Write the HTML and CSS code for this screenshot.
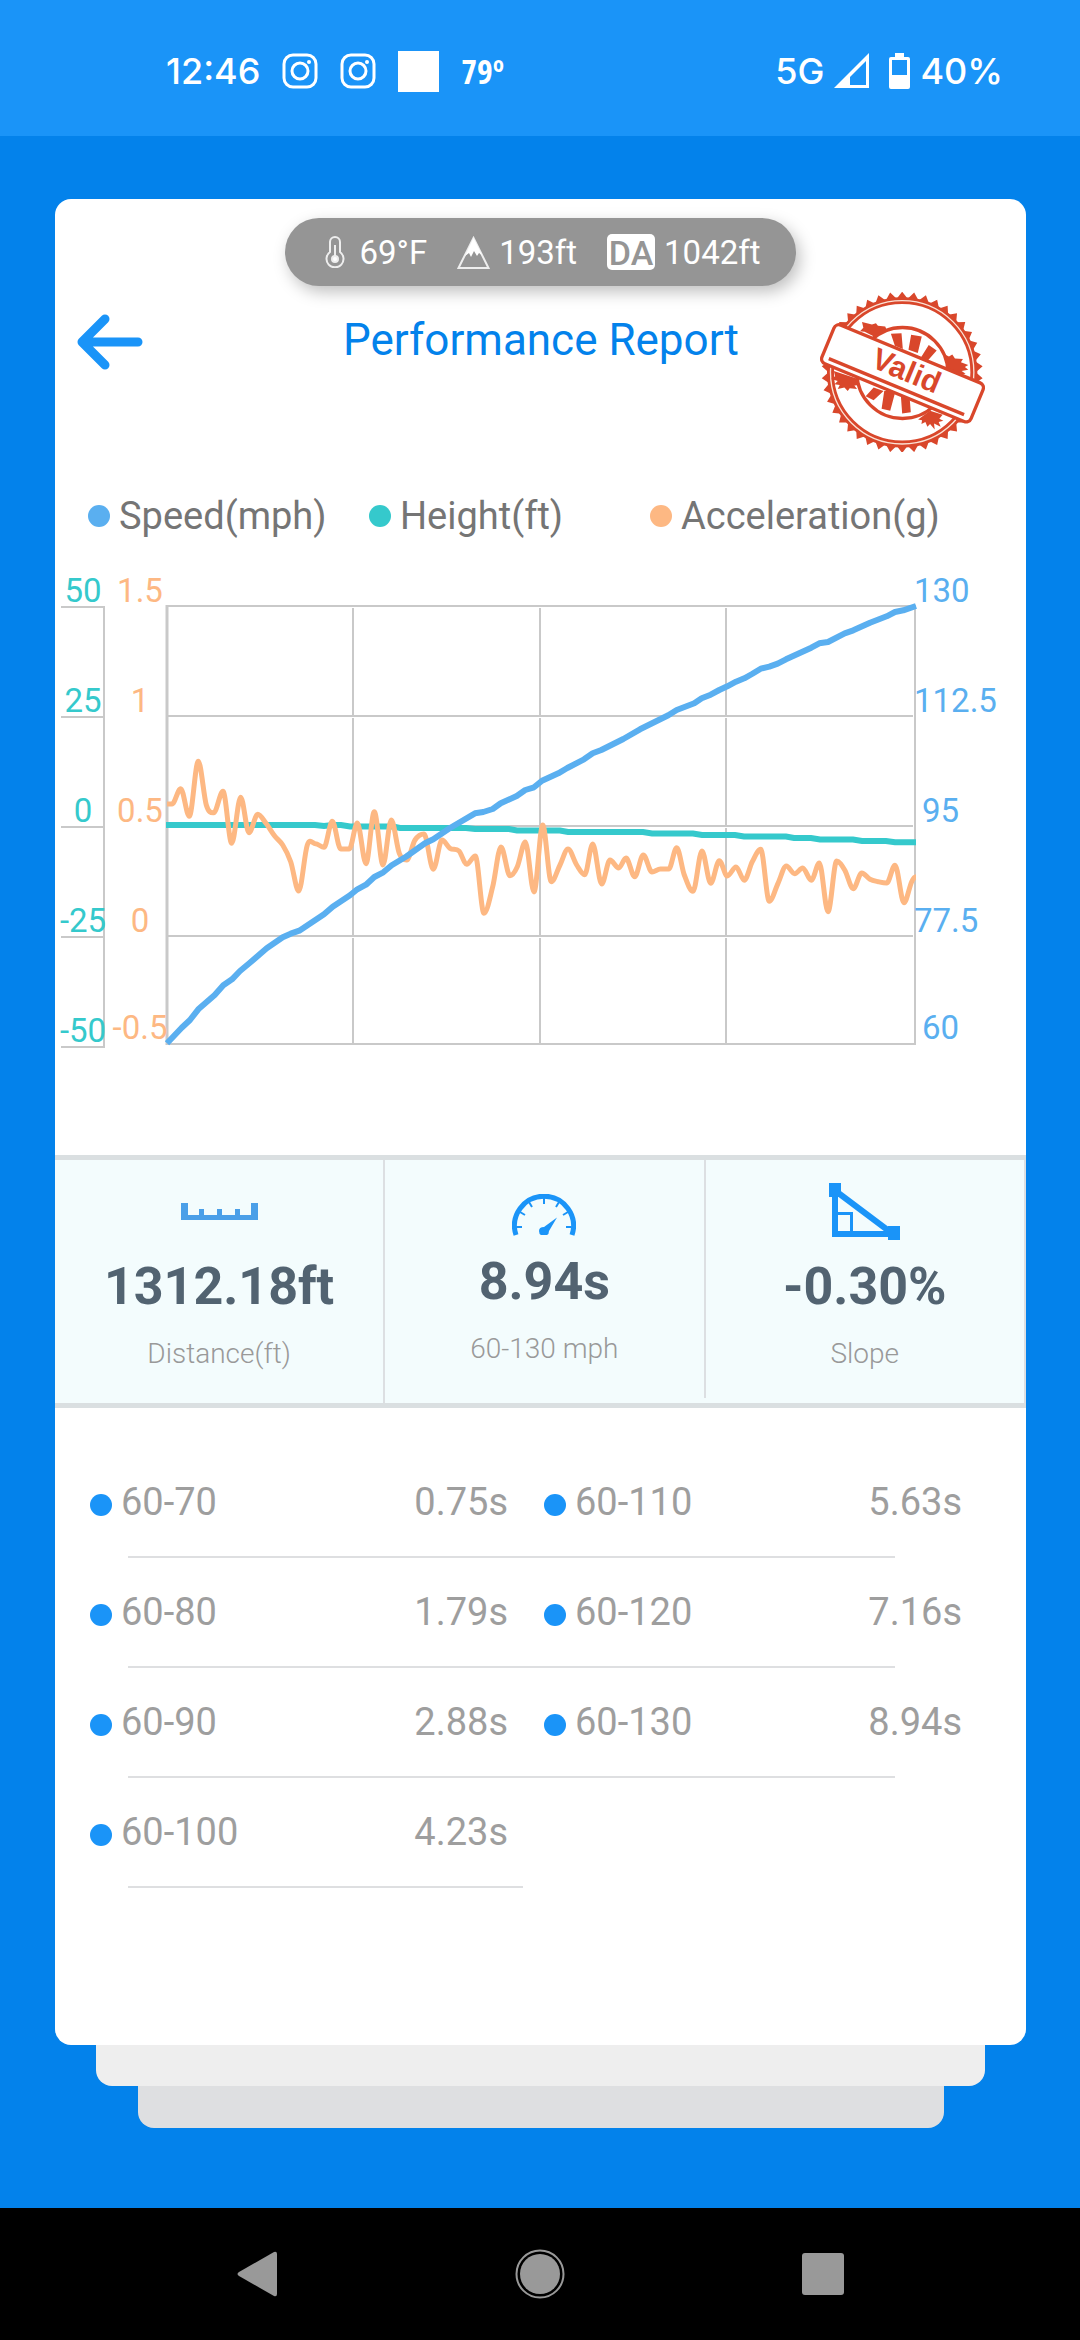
FILE: index.html
```html
<!DOCTYPE html>
<html lang="en">
<head>
    <meta charset="UTF-8">
    <meta name="viewport" content="width=device-width, initial-scale=1.0">
    <title>Performance Report</title>
    <link rel="stylesheet" href="styles.css">
</head>
<body>
    <div class="status-bar">
        <div class="status-left">
            <span>12:46</span>
            <svg class="app-icon" viewBox="0 0 36 36" fill="none" stroke="#fff" stroke-width="3">
                <rect x="2" y="2" width="32" height="32" rx="9"/>
                <circle cx="18" cy="18" r="8"/>
                <circle cx="27" cy="9" r="2" fill="#fff" stroke="none"/>
            </svg>
            <svg class="app-icon" viewBox="0 0 36 36" fill="none" stroke="#fff" stroke-width="3">
                <rect x="2" y="2" width="32" height="32" rx="9"/>
                <circle cx="18" cy="18" r="8"/>
                <circle cx="27" cy="9" r="2" fill="#fff" stroke="none"/>
            </svg>
            <span class="blank-icon"></span>
            <span class="temp">79º</span>
        </div>
        <div class="status-right">
            <span>5G</span>
            <svg width="35" height="36" viewBox="0 0 35 36" fill="#fff">
                <path fill-rule="evenodd" d="M35 0V35H0ZM32 8L16 24V32H32Z"/>
            </svg>
            <svg class="battery" width="21" height="36" viewBox="0 0 21 36" fill="#fff">
                <path fill-rule="evenodd" d="M6 0h9v4h4q2 0 2 2v28q0 2-2 2H2q-2 0-2-2V6q0-2 2-2h4zM3 7v15h15V7z"/>
            </svg>
            <span>40%</span>
        </div>
    </div>

    <main class="page">
        <div class="card">
            <div class="weather">
                <span class="weather-item">
                    <svg width="30" height="32" viewBox="0 0 30 32" fill="none" stroke="#eee" stroke-width="2">
                        <path d="M10 6a5 5 0 0 1 10 0v10a8.500 8.500 0 1 1-10 0z"/>
                        <path d="M15 9v13"/>
                        <circle cx="15" cy="23" r="3" fill="#fff"/>
                    </svg>
                    69°F
                </span>
                <span class="weather-item">
                    <svg width="33" height="33" viewBox="0 0 33 33" fill="none" stroke="#eee" stroke-width="2">
                        <path d="M16.500 2L31.500 32H1.500z"/>
                        <path d="M16.500 2L25 19l-3-2-2 3-3-5-3 6-2-4-4 3z" fill="#fff" stroke="none"/>
                    </svg>
                    193ft
                </span>
                <span class="weather-item">
                    <span class="da">DA</span>
                    1042ft
                </span>
            </div>

            <header class="header">
                <button class="back" aria-label="Back">
                    <svg width="66" height="56" viewBox="0 0 66 56" fill="none" stroke="#1a94f8" stroke-width="9" stroke-linecap="round" stroke-linejoin="round">
                        <path d="M28 5L5 28l23 23M6 28h55"/>
                    </svg>
                </button>
                <h1>Performance Report</h1>
                <svg class="stamp" viewBox="180 64 494 482" fill="none" stroke="#d9472b">
                    <polygon id="stampTeeth" fill="#d9472b" stroke="none"/>
                    <circle cx="426" cy="306" r="216" fill="#fff" stroke-width="21"/>
                    <circle cx="426" cy="306" r="216" stroke="#fbe3d6" stroke-width="4"/>
                    <g fill="#d9472b" stroke="none">
                        <path d="M305 154l30 8 12-4 6 8 22 2 6 14 14 6-30 22-52-26-14-2 10-10z"/>
                        <path d="M545 248l22 10 10-6 8 12 24 2-6 10 22 8-10 6 10 8-20 4 12 8-40 6-40-16z"/>
                        <path d="M220 302l80 26-8 10 10 6-20 2 8 10-22-2-6 8-10-10-20 4 6-12-16-2 10-10-20-6 12-8z"/>
                        <path d="M474 448l36-26 38 12-10 12 12 6-14 4 6 14-20-10 2 18-14-16-8 8-6-14-12 6 2-12z"/>
                    </g>
                    <circle cx="427" cy="308" r="137" fill="#fff" stroke-width="10"/>
                    <g fill="#d9472b" stroke="none">
                        <path d="M392 190l32-2 4 48-24-10zM453 193l32 5-12 50-28-10zM506 224l24 16-28 32-20-10z"/>
                        <path d="M340 352l30 10-30 28-24-12zM372 362h34l-16 60-26-6zM422 376h26l4 50-26 4z"/>
                    </g>
                    <g transform="translate(427 309) rotate(22.500)">
                        <rect x="-243" y="-63" width="486" height="126" rx="16" fill="#fff" stroke-width="10"/>
                        <path d="M-222 44H219" stroke-width="10"/>
                        <text class="stamp-text" x="8" y="19">Valid</text>
                    </g>
                </svg>
            </header>

            <ul class="legend">
                <li><span class="dot speed"></span>Speed(mph)</li>
                <li><span class="dot height"></span>Height(ft)</li>
                <li><span class="dot accel"></span>Acceleration(g)</li>
            </ul>

            <svg class="chart" viewBox="0 0 971 500">
                <!-- height axis -->
                <path class="grid" d="M6 47H50M6 157H50M6 267H50M6 377H50M6 487H50M49 46V488"/>
                <!-- plot grid -->
                <path class="grid" d="M112 46H861M112 156H858M112 266H858M112 376H858M112 484H861M860 46V485"/>
                <path class="grid columns" d="M298 48V484M485 48V484M671 48V484"/>
                <path class="grid base" d="M112 45V485"/>

                <path id="heightLine" class="line-height"/>
                <path id="accelLine" class="line-accel"/>
                <path id="speedLine" class="line-speed"/>

                <g class="label-height">
                    <text x="28" y="42">50</text>
                    <text x="28" y="152">25</text>
                    <text x="28" y="262">0</text>
                    <text x="28" y="372">-25</text>
                    <text x="28" y="482">-50</text>
                </g>
                <g class="label-accel">
                    <text x="85" y="42">1.5</text>
                    <text x="85" y="152">1</text>
                    <text x="85" y="262">0.5</text>
                    <text x="85" y="372">0</text>
                    <text x="85" y="479">-0.5</text>
                </g>
                <g class="label-speed">
                    <text x="859" y="42">130</text>
                    <text x="859" y="152">112.5</text>
                    <text x="867" y="262">95</text>
                    <text x="859" y="372">77.5</text>
                    <text x="867" y="479">60</text>
                </g>
            </svg>

            <section class="stats">
                <div class="stat">
                    <div class="stat-icon">
                        <svg width="77" height="17" viewBox="0 0 77 17" fill="#4a9fe8">
                            <path d="M0 0h7v12h11V6h5v6h13V6h5v6h13V6h5v6h11V0h7v17H0z"/>
                        </svg>
                    </div>
                    <div class="stat-value">1312.18ft</div>
                    <div class="stat-label">Distance(ft)</div>
                </div>
                <div class="stat time">
                    <div class="stat-icon">
                        <svg width="64" height="44" viewBox="0 0 64 44" fill="none" stroke="#1a94f8">
                            <path stroke-width="5" d="M4 41A29.500 29.500 0 1 1 60 41"/>
                            <path stroke-width="2" d="M5 33h5M8 18l5 3M17 8l3 5M32 4v6M47 8l-3 5M56 18l-5 3M59 33h-5"/>
                            <path fill="#1a94f8" stroke="none" d="M45 23.500L37 37q0 3-2 4h-6q-2-1-2-4 0-4 5-4z"/>
                        </svg>
                    </div>
                    <div class="stat-value">8.94s</div>
                    <div class="stat-label">60-130 mph</div>
                </div>
                <div class="stat">
                    <div class="stat-icon">
                        <svg width="71" height="57" viewBox="0 0 71 57" fill="none" stroke="#1a94f8">
                            <path stroke-width="6" d="M6 6V51H64L8 9"/>
                            <path stroke-width="3" d="M6 30.500H22.500V50"/>
                            <path fill="#1a94f8" stroke="none" d="M0 0h12v14H0zM59 43h12v14H59z"/>
                        </svg>
                    </div>
                    <div class="stat-value">-0.30%</div>
                    <div class="stat-label">Slope</div>
                </div>
            </section>

            <table class="splits">
                <tbody>
                    <tr>
                        <th><span class="dot"></span>60-70</th><td>0.75s</td>
                        <th><span class="dot"></span>60-110</th><td>5.63s</td>
                    </tr>
                    <tr>
                        <th><span class="dot"></span>60-80</th><td>1.79s</td>
                        <th><span class="dot"></span>60-120</th><td>7.16s</td>
                    </tr>
                    <tr>
                        <th><span class="dot"></span>60-90</th><td>2.88s</td>
                        <th><span class="dot"></span>60-130</th><td>8.94s</td>
                    </tr>
                    <tr class="half">
                        <th><span class="dot"></span>60-100</th><td>4.23s</td>
                    </tr>
                </tbody>
            </table>
        </div>
        <div class="sheet sheet-1"></div>
        <div class="sheet sheet-2"></div>
    </main>

    <nav class="nav-bar">
        <button aria-label="Back">
            <svg width="50" height="50" viewBox="0 0 50 50" fill="#999">
                <path d="M7 23L42 3q3-1 3 2v40q0 3-3 2L7 27q-3-2 0-4z"/>
            </svg>
        </button>
        <button aria-label="Home">
            <svg width="50" height="50" viewBox="0 0 50 50" fill="#999">
                <circle cx="25" cy="25" r="20"/>
                <circle cx="25" cy="25" r="23.500" fill="none" stroke="#999" stroke-width="2"/>
            </svg>
        </button>
        <button aria-label="Recent apps">
            <svg width="50" height="50" viewBox="0 0 50 50" fill="#999">
                <rect x="4" y="4" width="42" height="42" rx="3"/>
            </svg>
        </button>
    </nav>

    <script src="chart.js"></script>
</body>
</html>
```

FILE: styles.css
```css
* {
    box-sizing: border-box;
}
body {
    margin: 0;
    min-height: 100vh;
    display: flex;
    flex-direction: column;
    background: #0382eb;
    font-family: Roboto, sans-serif;
}
button {
    background: none;
    border: none;
    padding: 0;
    cursor: pointer;
}
svg {
    display: block;
}

/* status bar */
.status-bar {
    height: 136px;
    padding: 6px 77px 0 166px;
    display: flex;
    justify-content: space-between;
    align-items: center;
    background: #1a94f8;
    color: white;
    font-family: Inter, sans-serif;
    font-size: 36px;
    font-weight: 500;
}
.status-left {
    display: flex;
    align-items: center;
    gap: 22px;
}
.status-right {
    display: flex;
    align-items: center;
    gap: 10px;
}
.app-icon {
    width: 36px;
    height: 36px;
}
.blank-icon {
    width: 41px;
    height: 41px;
    background: white;
}
.temp {
    font-family: "Liberation Sans Narrow", "Open Sans Condensed", Roboto, sans-serif;
    font-size: 34px;
    font-weight: 700;
}
.battery {
    margin-left: 10px;
}

/* card */
.page {
    flex: 1;
    padding: 63px 54px 80px 55px;
}
.card {
    padding: 19px 0 157px;
    background: white;
    border-radius: 16px;
}
.sheet {
    border-radius: 0 0 16px 16px;
}
.sheet-1 {
    height: 41px;
    margin: 0 41px;
    background: #eee;
}
.sheet-2 {
    height: 42px;
    margin: 0 82px 0 83px;
    background: #dedfe1;
}
.weather {
    width: fit-content;
    height: 68px;
    margin: 0 auto;
    padding: 0 35px;
    display: flex;
    align-items: center;
    gap: 30px;
    background: #959595;
    border-radius: 34px;
    box-shadow: 4px 6px 16px rgba(0, 0, 0, 0.25);
    color: white;
    font-size: 33px;
}
.weather-item {
    display: flex;
    align-items: center;
    gap: 9px;
}
.da {
    width: 48px;
    height: 36px;
    background: white;
    border-radius: 5px;
    color: #959595;
    font-size: 34px;
    font-weight: 500;
    line-height: 38px;
    text-align: center;
}
.header {
    display: grid;
    grid-template-columns: 1fr auto 1fr;
    align-items: start;
    padding: 6px 41px 0 22px;
}
.back {
    justify-self: start;
    margin-top: 22px;
}
h1 {
    margin: 22px 0 0 20px;
    color: #0382eb;
    font-size: 44px;
    font-weight: 400;
    line-height: 52px;
}
.stamp {
    justify-self: end;
    width: 165px;
    height: 160px;
}
.stamp-text {
    fill: #d9472b;
    stroke: none;
    font-family: "Liberation Sans", sans-serif;
    font-size: 92px;
    font-weight: 700;
    text-anchor: middle;
}

/* chart */
.dot {
    flex: none;
    width: 22px;
    height: 22px;
    border-radius: 50%;
    background: #1a94f8;
}
.legend {
    list-style: none;
    margin: 42px 0 22px;
    padding: 0 95px 0 33px;
    display: grid;
    grid-template-columns: repeat(3, minmax(0, 1fr));
    color: #757575;
    font-size: 38px;
    line-height: 44px;
}
.legend li {
    display: flex;
    align-items: center;
    gap: 9px;
    white-space: nowrap;
}
.speed {
    background: #5aaff0;
}
.height {
    background: #35c9cc;
}
.accel {
    background: #fdb883;
}
.chart {
    width: 100%;
    margin-bottom: 95px;
    fill: none;
    font-size: 33px;
}
.grid {
    stroke: #c9c9c9;
    stroke-width: 2;
}
.columns {
    stroke-dasharray: 107 3;
}
.base {
    stroke-width: 3;
}
.line-height {
    stroke: #35c9cc;
    stroke-width: 6;
}
.line-accel {
    stroke: #fdb883;
    stroke-width: 5;
}
.line-speed {
    stroke: #5aaff0;
    stroke-width: 6;
    stroke-linejoin: round;
}
.label-height {
    fill: #35c9cc;
    text-anchor: middle;
}
.label-accel {
    fill: #fdb883;
    text-anchor: middle;
}
.label-speed {
    fill: #5aaff0;
}

/* stats */
.stats {
    display: grid;
    grid-template-columns: 34% 33% 33%;
    background: #f3fcfd;
    border-top: 5px solid #dadfe1;
    border-bottom: 5px solid #dadfe1;
}
.stat {
    padding: 19px 0 32px;
    border-right: 2px solid #dcdfe2;
    text-align: center;
}
.stat-icon {
    height: 64px;
    display: flex;
    align-items: center;
    justify-content: center;
}
.stat-value {
    margin: 13px 0 19px;
    color: #526371;
    font-size: 52px;
    font-weight: 700;
    line-height: 62px;
}
.stat-label {
    color: #999;
    font-size: 28px;
    font-weight: 300;
    line-height: 34px;
}
.time {
    margin-bottom: 5px;
}
.time .stat-icon {
    height: 59px;
    align-items: flex-end;
}

/* split times */
.splits {
    display: block;
    margin: 40px 28px 0 35px;
    color: #9e9e9e;
    font-size: 38px;
    line-height: 108px;
}
.splits tbody {
    display: block;
}
.splits tr {
    display: grid;
    grid-template-columns: repeat(4, 1fr);
}
.splits tr::after {
    content: "";
    grid-column: 1 / -1;
    height: 2px;
    margin: 0 103px 0 38px;
    background: #dedfe1;
}
.splits .half::after {
    grid-column: 1 / 3;
    margin-right: 21px;
}
.splits th {
    display: flex;
    align-items: center;
    gap: 9px;
    padding: 0;
    font-weight: 400;
}
.splits td {
    padding: 0 36px 0 0;
    text-align: right;
}
.splits .dot {
    margin-top: 6px;
}

/* navigation bar */
.nav-bar {
    height: 132px;
    padding: 0 116px;
    display: grid;
    grid-template-columns: repeat(3, 1fr);
    place-items: center;
    background: black;
}
```

FILE: chart.js
```js
const speed = [
    [112, 483.3], [126.7, 467.7], [135, 460], [143.3, 449.3], [159.7, 435], [168.3, 425.3], [177, 419.3],
    [185, 411], [194.3, 403.3], [211.7, 388.3], [227.7, 377.3], [235.7, 373.7], [244.3, 370.7], [269, 354.3],
    [277.7, 346.7], [295, 335.3], [302.3, 329.3], [311, 324.7], [319.3, 317], [328.3, 312.3], [336.7, 305.3],
    [351.7, 296.3], [370, 283.3], [378.3, 279.3], [395, 268], [420, 253.3], [428.3, 252], [437.7, 249],
    [445.7, 243.3], [461.7, 236], [470.3, 230], [479, 227.3], [487, 220.7], [503.3, 213.3], [512.3, 208],
    [529, 199.3], [537.7, 193.3], [546.3, 190], [568.3, 179], [585, 169.3], [613.3, 155.3], [621.7, 150],
    [639.3, 143.3], [646.7, 138.3], [655.7, 134.7], [664.3, 130], [672.3, 126.3], [681, 121.7], [689.3, 118.3],
    [697, 114], [705.7, 108.7], [714.3, 106.7], [722.7, 103.7], [731, 99.3], [756.3, 87.7], [764.3, 83.3],
    [773, 82], [789.7, 73.3], [798.3, 70.3], [815, 62.7], [831.7, 56.3], [840, 52], [848.3, 50.3], [861, 46]
];

const height = [
    [111, 265], [260, 265], [269, 266], [278, 265], [286, 265], [295, 266.5], [338, 266.5], [345, 268],
    [411, 268], [420, 269], [454, 269], [462, 270.5], [505, 270.5], [513, 272], [588, 272], [597, 273.5],
    [638, 273.5], [647, 275], [680, 275], [689, 276.5], [731, 276.5], [739, 278], [756, 278], [765, 279.5],
    [798, 279.5], [807, 281], [831, 281], [840, 282.3], [861, 282.3]
];

const accel = [
    [112, 244], [117, 244], [125.7, 228.7], [134.3, 256.3], [143.3, 201.3], [151.3, 245], [158.7, 252.7],
    [168, 231.3], [176.7, 283.3], [185.7, 237.3], [194, 272.7], [202.7, 254.3], [211, 263.3], [219.7, 276],
    [227.7, 285], [235.7, 301.7], [243.7, 331], [252.3, 285], [260.3, 283.7], [269, 287.3], [277.3, 261.3],
    [285.7, 289], [294.3, 289], [302.3, 263], [311, 303.7], [319.3, 251.7], [328, 305], [336.3, 260],
    [344.3, 293.3], [351.7, 300], [360, 280], [369, 274], [378.3, 309.3], [387, 280], [395, 288.3],
    [404, 291], [411.7, 304.3], [420.3, 296], [429, 353.3], [437.7, 326.7], [446, 287], [455, 315.7],
    [462.3, 306.7], [470.3, 282], [479, 332], [487.7, 265], [496.3, 321.7], [505, 305], [513, 289],
    [521.7, 305], [529.7, 314.7], [537.7, 284], [546.7, 324], [555, 300], [563.7, 308], [571, 298],
    [579.7, 316.7], [588.3, 295], [597, 312], [605.3, 309], [613.7, 309], [621.7, 287.7], [629.3, 315],
    [638, 331.3], [647, 291], [655.7, 323.3], [664.3, 300.7], [672.3, 316], [681, 307], [689.3, 320.3],
    [697.3, 301.7], [705.7, 289.3], [714.3, 341.3], [723, 323.3], [731.3, 306], [739.7, 313.7], [747.7, 308],
    [756.3, 320.3], [764.3, 303], [773, 351.7], [781.7, 301], [789.7, 310], [798.3, 328.7], [806.7, 313],
    [815, 319.3], [823.3, 321.7], [831.7, 323], [840, 305.3], [849, 342.7], [856.7, 321.7], [861, 316.7]
];

function straightPath(points) {
    return 'M' + points.map(p => p.join(' ')).join('L');
}

// flat at every peak and dip, sloped in between
function smoothPath(points) {
    const slope = points.map((p, i) => {
        const a = points[i - 1];
        const b = points[i + 1];
        if (!a || !b || (p[1] - a[1]) * (b[1] - p[1]) <= 0) return 0;
        return (b[1] - a[1]) / (b[0] - a[0]);
    });
    let d = 'M' + points[0].join(' ');
    for (let i = 1; i < points.length; i++) {
        const [x0, y0] = points[i - 1];
        const [x1, y1] = points[i];
        const h = (x1 - x0) / 3;
        d += `C${x0 + h} ${y0 + slope[i - 1] * h} ${x1 - h} ${y1 - slope[i] * h} ${x1} ${y1}`;
    }
    return d;
}

function teeth(cx, cy, outer, inner, count) {
    const points = [];
    for (let i = 0; i < count * 2; i++) {
        const r = i % 2 ? inner : outer;
        const angle = Math.PI * i / count - Math.PI / 2;
        points.push((cx + r * Math.cos(angle)).toFixed(1) + ',' + (cy + r * Math.sin(angle)).toFixed(1));
    }
    return points.join(' ');
}

document.getElementById('speedLine').setAttribute('d', straightPath(speed));
document.getElementById('heightLine').setAttribute('d', straightPath(height));
document.getElementById('accelLine').setAttribute('d', smoothPath(accel));
document.getElementById('stampTeeth').setAttribute('points', teeth(426, 306, 243, 222, 42));
```
